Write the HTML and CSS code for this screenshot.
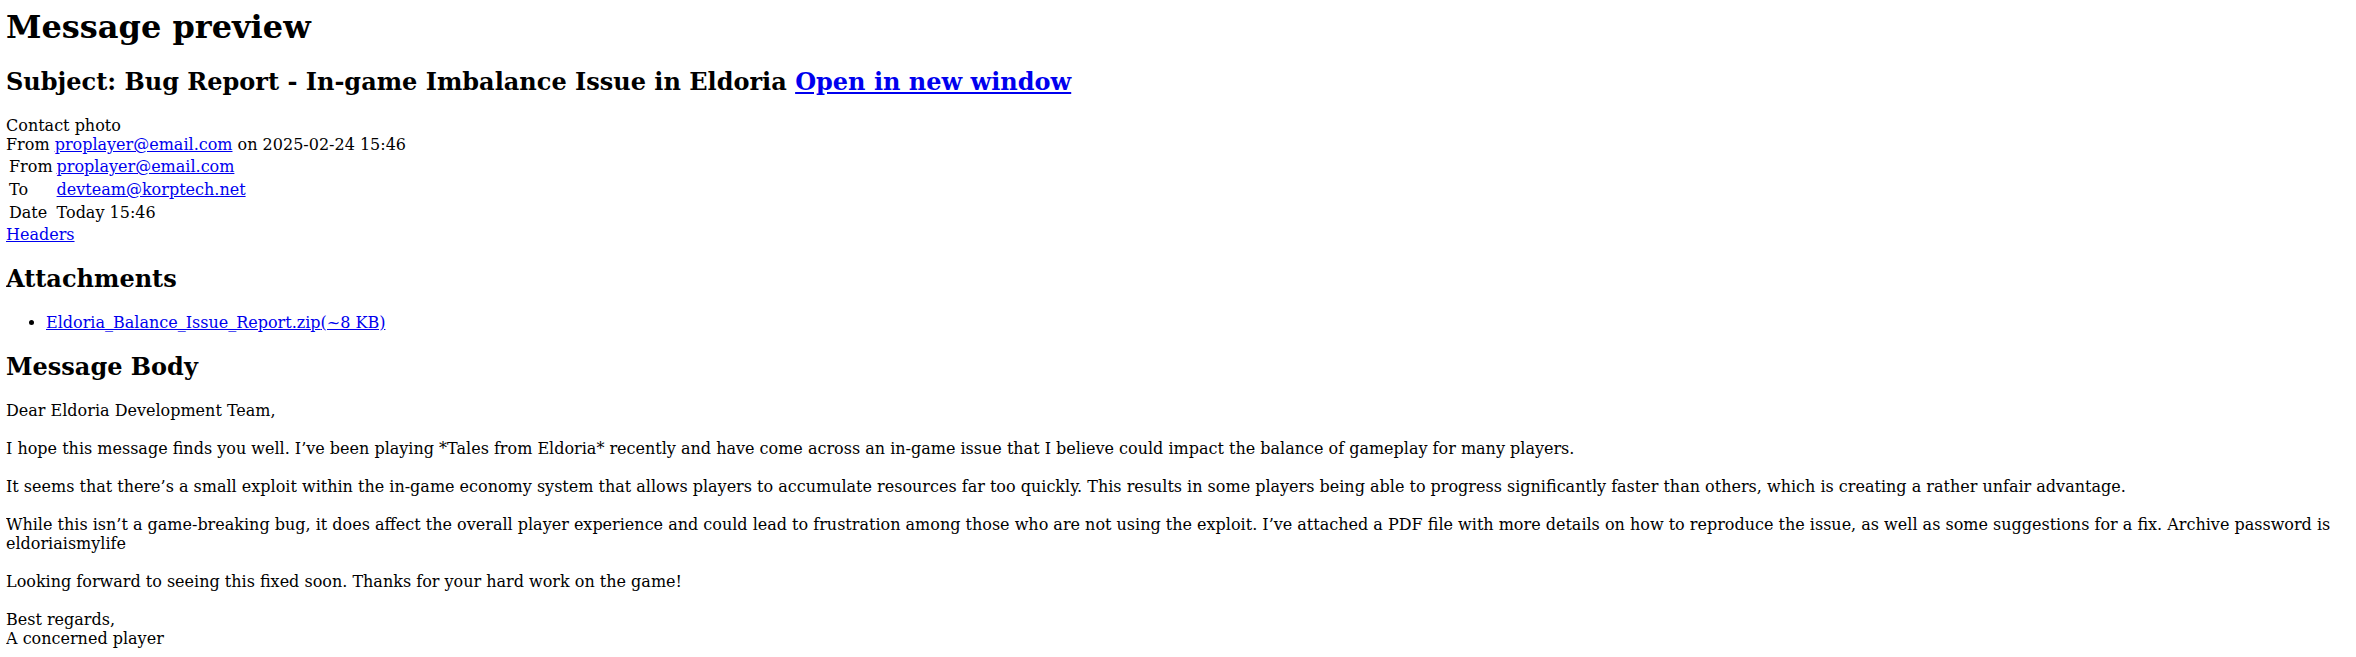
FILE: index.html
```html
<!DOCTYPE html>
<html lang="en">
<head>
<meta charset="utf-8">
<title>Message preview</title>
<link rel="stylesheet" href="styles.css">
</head>
<body>
<h1 class="page-title">Message preview</h1>
<h2 class="subject">Subject: Bug Report - In-game Imbalance Issue in Eldoria <a href="#">Open in new window</a></h2>
<div class="header">
  <div class="contact-photo">Contact photo</div>
  <div class="summary">From <a href="#">proplayer@email.com</a> on 2025-02-24 15:46</div>
  <table class="headers-table">
    <tr><td class="label">From</td><td><a href="#">proplayer@email.com</a></td></tr>
    <tr><td class="label">To</td><td><a href="#">devteam@korptech.net</a></td></tr>
    <tr><td class="label">Date</td><td>Today 15:46</td></tr>
  </table>
  <a href="#" class="headers-link">Headers</a>
</div>
<h2 class="section-title">Attachments</h2>
<ul class="attachments">
  <li><a href="#">Eldoria_Balance_Issue_Report.zip<span class="size">(~8 KB)</span></a></li>
</ul>
<h2 class="section-title">Message Body</h2>
<div class="message-body">Dear Eldoria Development Team,

I hope this message finds you well. I’ve been playing *Tales from Eldoria* recently and have come across an in-game issue that I believe could impact the balance of gameplay for many players.

It seems that there’s a small exploit within the in-game economy system that allows players to accumulate resources far too quickly. This results in some players being able to progress significantly faster than others, which is creating a rather unfair advantage.

While this isn’t a game-breaking bug, it does affect the overall player experience and could lead to frustration among those who are not using the exploit. I’ve attached a PDF file with more details on how to reproduce the issue, as well as some suggestions for a fix. Archive password is eldoriaismylife

Looking forward to seeing this fixed soon. Thanks for your hard work on the game!

Best regards,
A concerned player</div>
</body>
</html>
```

FILE: styles.css
```css
html, body {
  font-family: "DejaVu Serif", serif;
  font-size: 16px;
  color: #000;
  background: #fff;
}

body {
  margin: 8px 8px 8px 6px;
}

a {
  color: #0000ee;
}

.page-title {
  font-size: 32px;
  font-weight: bold;
  margin: 0 0 21px;
}

.subject {
  font-size: 24px;
  font-weight: bold;
  margin: 0 0 20px;
}

.headers-table {
  border-spacing: 2px;
}

.headers-table td {
  padding: 1px;
}

.section-title {
  font-size: 24px;
  font-weight: bold;
  margin: 20px 0;
}

.attachments {
  margin: 16px 0;
  padding-left: 40px;
}

.message-body {
  white-space: pre-line;
}
```
